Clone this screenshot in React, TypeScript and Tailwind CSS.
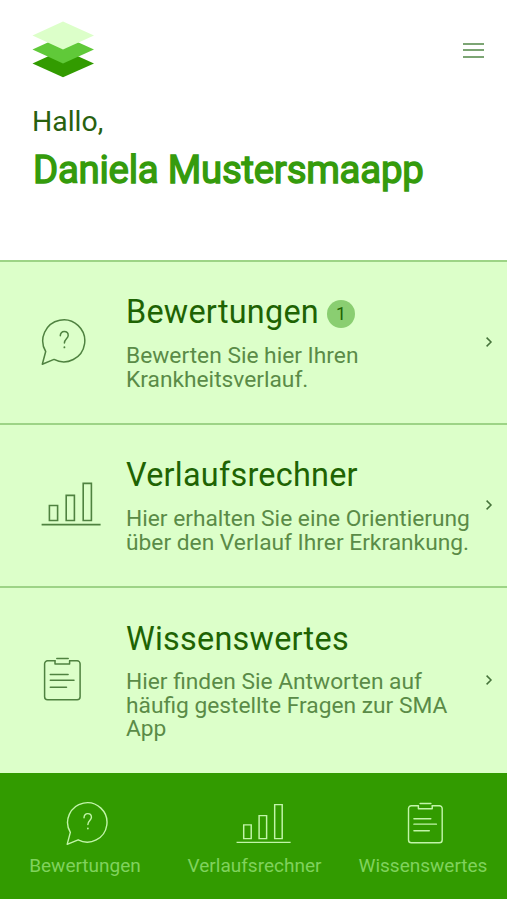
import type { ReactNode } from 'react';

/* Icons */
interface IconProps {
  className?: string;
}

function Logo() {
  return (
    <svg viewBox="0 0 64 58" className="w-16 h-[58px]">
      <path d="M1.5 43.5 32 29.5l31 14L32 57.3z" fill="#329b00" />
      <path d="M1.5 29.5 32 15.5l31 14-31 14z" fill="#60c939" />
      <path d="M1.5 15.5 32 1.5l31 14-31 14z" fill="#dcffc9" />
    </svg>
  );
}

function BubbleIcon({ className }: IconProps) {
  return (
    <svg viewBox="0 0 48 50" fill="none" stroke="currentColor" strokeWidth="1.5" strokeLinejoin="round" strokeLinecap="round" className={className}>
      <path d="M5.7 34.5A21 21 0 1 1 14 42.4L2.3 47.2z" />
      <path d="M20.3 18.8c0-2.6 1.6-4.3 3.9-4.3s4 1.6 4 3.9c0 3.2-3.8 3.6-3.8 7.6" />
      <path d="M24.4 30.1v.3" strokeWidth="1.8" />
    </svg>
  );
}

function ChartIcon({ className }: IconProps) {
  return (
    <svg viewBox="0 0 60 44" fill="none" stroke="currentColor" strokeWidth="1.6" className={className}>
      <path d="M8.4 23.5h8.2v15H8.4zM25.2 13.4h8.2v25.1h-8.2zM42.2 1.4h8.2v37.1h-8.2zM.6 42.6h59" />
    </svg>
  );
}

function ClipboardIcon({ className }: IconProps) {
  return (
    <svg viewBox="0 0 39 44" fill="none" stroke="currentColor" strokeWidth="1.5" strokeLinecap="round" strokeLinejoin="round" className={className}>
      <path d="M12 3.8H4.6a3 3 0 0 0-3 3v33a3 3 0 0 0 3 3h29.5a3 3 0 0 0 3-3v-33a3 3 0 0 0-3-3h-7.4" />
      <path d="M13.8 1.4h11.4M12 3.8v3.1h14.6V3.8" />
      <path d="M7.3 17.5h17.8M7.3 23.2h23.7M7.3 30.2h16.2" />
    </svg>
  );
}

function ChevronIcon() {
  return (
    <svg viewBox="0 0 8 12" fill="none" stroke="currentColor" strokeWidth="1.5" className="w-2 h-3 mb-0.5 text-[#45733a]">
      <path d="m1.6 1.6 4.4 4.4-4.4 4.4" />
    </svg>
  );
}

/* Menu row */
interface MenuCardProps {
  title: string;
  badge?: number;
  icon: ReactNode;
  className: string;
  children: ReactNode;
}

function MenuCard({ title, badge, icon, className, children }: MenuCardProps) {
  return (
    <button className={`flex items-center w-full text-left border-t-2 border-[#9dd486] ${className}`}>
      <span className="w-[126px] shrink-0 pl-10">{icon}</span>
      <span className="flex-1">
        <span className="flex items-center gap-2 h-[38px] text-[32.4px] tracking-[0.25px] text-[#1e6303]">
          {title}
          {badge && (
            <span className="flex items-center justify-center size-7 mt-0.5 rounded-full bg-[#8ace71] text-lg tracking-normal">
              {badge}
            </span>
          )}
        </span>
        <span className="block mt-3 text-[22.75px] leading-[23.8px] whitespace-nowrap text-[#5a8b47]">{children}</span>
      </span>
      <span className="w-[22px] shrink-0">
        <ChevronIcon />
      </span>
    </button>
  );
}

export default function App() {
  return (
    <div className="flex flex-col w-full h-[900px] overflow-hidden bg-white font-[Roboto,sans-serif]">
      <header className="h-[260px] shrink-0 pt-5 pl-[31px] pr-[23px]">
        <div className="flex items-center justify-between">
          <Logo />
          <button className="flex flex-col gap-[4.5px] w-[21px] mt-0.5" aria-label="Menü">
            <span className="h-0.5 bg-[#7ca574]" />
            <span className="h-0.5 bg-[#7ca574]" />
            <span className="h-0.5 bg-[#7ca574]" />
          </button>
        </div>
        <p className="mt-6 pl-px text-[28.4px] leading-10 text-[#28610f]">Hallo,</p>
        <h1 className="mt-1 pl-0.5 text-[38.4px] leading-[48px] tracking-[-0.25px] font-normal [-webkit-text-stroke:1.4px_#359b0c] text-[#359b0c] whitespace-nowrap">
          Daniela Mustersmaapp
        </h1>
      </header>

      <main className="flex flex-col h-[513px] shrink-0 bg-[#dcffc9]">
        <MenuCard title="Bewertungen" badge={1} icon={<BubbleIcon className="w-12 h-[50px] mb-0.5 text-[#4f8240]" />} className="h-[163px]">
          Bewerten Sie hier Ihren
          <br />
          Krankheitsverlauf.
        </MenuCard>
        <MenuCard title="Verlaufsrechner" icon={<ChartIcon className="w-[60px] h-11 ml-px mb-[3px] text-[#4f8240]" />} className="h-[163px]">
          Hier erhalten Sie eine Orientierung
          <br />
          über den Verlauf Ihrer Erkrankung.
        </MenuCard>
        <MenuCard title="Wissenswertes" icon={<ClipboardIcon className="w-[39px] h-11 ml-[3px] mb-[3px] text-[#4f8240]" />} className="h-[187px]">
          Hier finden Sie Antworten auf
          <br />
          häufig gestellte Fragen zur SMA
          <br />
          App
        </MenuCard>
      </main>

      <nav className="flex h-[126px] shrink-0 pt-7 bg-[#329b00] text-[#80d25d] text-[19px]">
        <a className="flex flex-col items-center w-[170px]">
          <BubbleIcon className="w-[45px] h-[47px] -mt-px mb-[5px] ml-1 text-[#c2f5a9]" />
          Bewertungen
        </a>
        <a className="flex flex-col items-center w-[169px]">
          <ChartIcon className="w-[55px] h-[41px] mt-[1.5px] mb-[8.5px] ml-[17px] text-[#c2f5a9]" />
          Verlaufsrechner
        </a>
        <a className="flex flex-col items-center w-[168px]">
          <ClipboardIcon className="w-[37px] h-[42px] mt-px mb-2 ml-[5px] text-[#c2f5a9]" />
          Wissenswertes
        </a>
      </nav>
    </div>
  );
}
